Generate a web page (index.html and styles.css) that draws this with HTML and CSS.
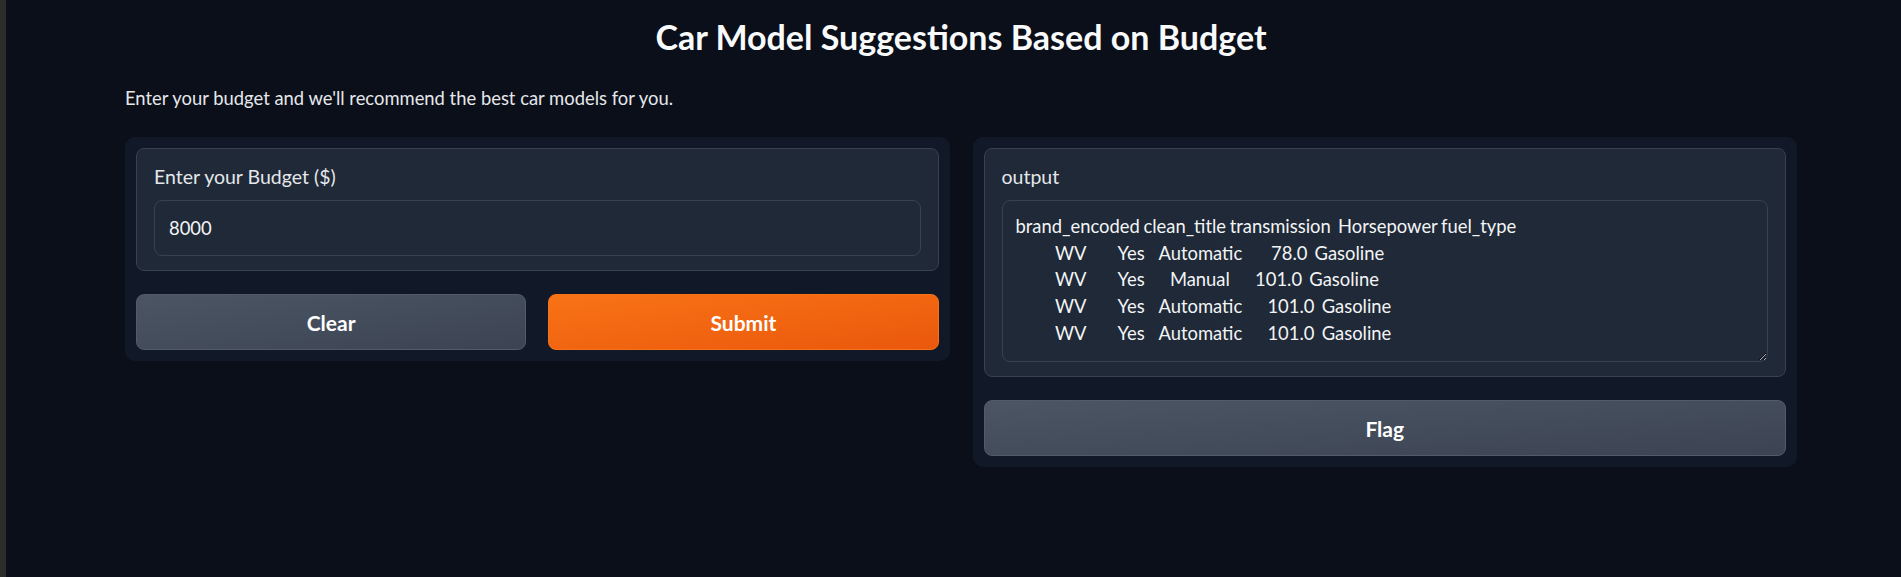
FILE: index.html
```html
<!DOCTYPE html>
<html lang="en">
<head>
<meta charset="utf-8">
<title>Car Model Suggestions Based on Budget</title>
<link rel="stylesheet" href="styles.css">
</head>
<body>
<div class="frame">
  <div class="edge"></div>
  <main class="app">
    <h1 class="title">Car Model Suggestions Based on Budget</h1>
    <p class="desc">Enter your budget and we'll recommend the best car models for you.</p>
    <div class="row">
      <section class="panel">
        <label class="block">
          <span class="label">Enter your Budget ($)</span>
          <input class="input" type="text" value="8000">
        </label>
        <div class="btn-row">
          <button class="btn secondary" type="button">Clear</button>
          <button class="btn primary" type="button">Submit</button>
        </div>
      </section>
      <section class="panel">
        <label class="block">
          <span class="label">output</span>
          <textarea class="output" readonly>brand_encoded clean_title transmission  Horsepower fuel_type
           WV         Yes    Automatic        78.0  Gasoline
           WV         Yes       Manual       101.0  Gasoline
           WV         Yes    Automatic       101.0  Gasoline
           WV         Yes    Automatic       101.0  Gasoline</textarea>
        </label>
        <button class="btn secondary" type="button">Flag</button>
      </section>
    </div>
  </main>
</div>
</body>
</html>
```

FILE: styles.css
```css
html, body {
  margin: 0;
  padding: 0;
  height: 100%;
  background: #0b0f19;
}

body {
  font-family: Lato, "Noto Sans", sans-serif;
  color: #f3f4f6;
}

.frame {
  display: flex;
  min-height: 100%;
}

.edge {
  width: 6px;
  flex: 0 0 6px;
  background: #2c2c2c;
}

.app {
  flex: 1;
  padding: 15px 104px 0 119px;
  display: flex;
  flex-direction: column;
}

.title {
  margin: 0;
  font-size: 34px;
  line-height: 44px;
  font-weight: 700;
  text-align: center;
  color: #f9fafb;
}

.desc {
  margin: 26px 0 0;
  font-size: 18.4px;
  line-height: 27px;
  color: #e5e7eb;
}

.row {
  margin-top: 25px;
  display: flex;
  align-items: flex-start;
  gap: 23px;
}

.panel {
  flex: 1;
  background: #111827;
  border-radius: 10px;
  padding: 11px;
  display: flex;
  flex-direction: column;
  gap: 23px;
}

.block {
  display: flex;
  flex-direction: column;
  background: #1f2937;
  border: 1px solid #374151;
  border-radius: 8px;
  padding: 15px 17px 14px;
}

.label {
  font-size: 19.5px;
  line-height: 25px;
  color: #e5e7eb;
  margin-bottom: 11px;
}

.input {
  height: 56px;
  box-sizing: border-box;
  padding: 0 14px;
  background: #1f2937;
  border: 1px solid #374151;
  border-radius: 8px;
  color: #f3f4f6;
  font-family: inherit;
  font-size: 18.4px;
  outline: none;
}

.output {
  height: 162px;
  box-sizing: border-box;
  padding: 12px 13px;
  background: #1f2937;
  border: 1px solid #374151;
  border-radius: 8px;
  color: #f3f4f6;
  font-family: inherit;
  font-size: 18.4px;
  line-height: 26.7px;
  word-spacing: -1.1px;
  white-space: pre;
  overflow: hidden;
  resize: vertical;
  outline: none;
  color-scheme: dark;
}

.btn-row {
  display: flex;
  gap: 22px;
}

.btn {
  flex: none;
  height: 56px;
  border-radius: 8px;
  font-family: inherit;
  font-size: 21px;
  font-weight: 700;
  color: #ffffff;
  cursor: pointer;
}

.btn-row .btn {
  flex: 1;
}

.secondary {
  background: linear-gradient(to bottom right, #4b5563, #3c4454);
  border: 1px solid #525b69;
}

.primary {
  background: linear-gradient(to bottom right, #f97316, #ea580c);
  border: 1px solid #f97316;
}
```
